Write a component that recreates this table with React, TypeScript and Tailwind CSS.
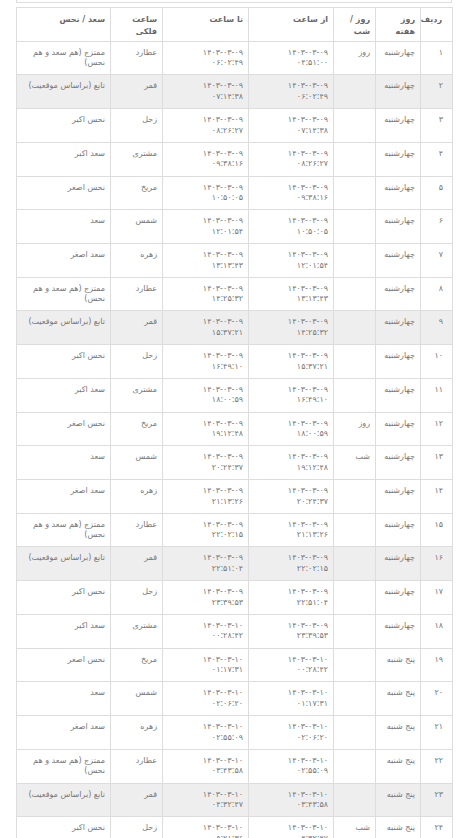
import type { ReactNode } from 'react'

type Row = {
  day: string
  dayNight: string
  from: [string, string]
  to: [string, string]
  planet: string
  fate: string
}

const D09 = '۱۴۰۳-۰۳-۰۹'
const D10 = '۱۴۰۳-۰۳-۱۰'
const WED = 'چهارشنبه'
const THU = 'پنج شنبه'

const fates: Record<string, string[]> = {
  عطارد: ['ممتزج (هم سعد و هم', 'نحس)'],
  قمر: ['تابع (براساس موقعیت)'],
  زحل: ['نحس اکبر'],
  مشتری: ['سعد اکبر'],
  مریخ: ['نحس اصغر'],
  شمس: ['سعد'],
  زهره: ['سعد اصغر'],
}

const planets = ['عطارد', 'قمر', 'زحل', 'مشتری', 'مریخ', 'شمس', 'زهره']

// start times, in order; the end of one hour is the start of the next
const times: Array<[string, string]> = [
  [D09, '۰۴:۵۱:۰۰'],
  [D09, '۰۶:۰۲:۴۹'],
  [D09, '۰۷:۱۴:۳۸'],
  [D09, '۰۸:۲۶:۲۷'],
  [D09, '۰۹:۳۸:۱۶'],
  [D09, '۱۰:۵۰:۰۵'],
  [D09, '۱۲:۰۱:۵۴'],
  [D09, '۱۳:۱۳:۴۳'],
  [D09, '۱۴:۲۵:۳۲'],
  [D09, '۱۵:۳۷:۲۱'],
  [D09, '۱۶:۴۹:۱۰'],
  [D09, '۱۸:۰۰:۵۹'],
  [D09, '۱۹:۱۲:۴۸'],
  [D09, '۲۰:۲۴:۳۷'],
  [D09, '۲۱:۱۳:۲۶'],
  [D09, '۲۲:۰۲:۱۵'],
  [D09, '۲۲:۵۱:۰۴'],
  [D09, '۲۳:۳۹:۵۳'],
  [D10, '۰۰:۲۸:۴۲'],
  [D10, '۰۱:۱۷:۳۱'],
  [D10, '۰۲:۰۶:۲۰'],
  [D10, '۰۲:۵۵:۰۹'],
  [D10, '۰۳:۴۳:۵۸'],
  [D10, '۰۴:۳۲:۴۷'],
  [D10, '۰۵:۲۱:۳۶'],
]

const dayNightMarks: Record<number, string> = { 0: 'روز', 11: 'روز', 12: 'شب', 23: 'شب' }

const rows: Row[] = Array.from({ length: 24 }, (_, i) => {
  const planet = planets[i % 7]
  return {
    day: i < 18 ? WED : THU,
    dayNight: dayNightMarks[i] ?? '',
    from: times[i],
    to: times[i + 1],
    planet,
    fate: planet,
  }
})

const faDigits = (n: number) => String(n).replace(/\d/g, (d) => '۰۱۲۳۴۵۶۷۸۹'[Number(d)])

function Cell({ children, className = '' }: { children?: ReactNode; className?: string }) {
  return (
    <td className={`border border-[#dddddd] pr-[5px] pl-[3px] pt-[6px] align-top leading-[10.5px] ${className}`}>
      {children}
    </td>
  )
}

function Lines({ lines }: { lines: string[] }) {
  return (
    <>
      {lines.map((line) => (
        <div key={line} className="whitespace-nowrap">
          {line}
        </div>
      ))}
    </>
  )
}

export default function App() {
  return (
    <div
      className="h-[838px] w-[470px] overflow-hidden bg-white text-[8px] text-[#777777]"
      style={{ fontFamily: '"DejaVu Sans", Tahoma, sans-serif' }}
    >
      <div className="ml-[16px] h-[3px] w-[436px] border-x border-b border-[#dddddd]" />
      <table dir="rtl" className="ml-[16px] mt-[4px] w-[436px] table-fixed border-collapse">
        <colgroup>
          <col className="w-[32px]" />
          <col className="w-[45px]" />
          <col className="w-[42px]" />
          <col className="w-[85px]" />
          <col className="w-[86px]" />
          <col className="w-[52px]" />
          <col className="w-[94px]" />
        </colgroup>
        <thead>
          <tr className="h-[33.7px] text-right font-bold text-[#666666]">
            <Cell className="pr-[10px] leading-[12px]">ردیف</Cell>
            <Cell className="leading-[12px]">
              <Lines lines={['روز', 'هفته']} />
            </Cell>
            <Cell className="leading-[12px]">
              <Lines lines={['روز /', 'شب']} />
            </Cell>
            <Cell className="leading-[12px]">از ساعت</Cell>
            <Cell className="leading-[12px]">تا ساعت</Cell>
            <Cell className="leading-[12px]">
              <Lines lines={['ساعت', 'فلکی']} />
            </Cell>
            <Cell className="leading-[12px]">سعد / نحس</Cell>
          </tr>
        </thead>
        <tbody>
          {rows.map((row, i) => (
            <tr key={i} className={`h-[33.73px] ${row.planet === 'قمر' ? 'bg-[#eeeeee]' : ''}`}>
              <Cell className="pr-[9px]">{faDigits(i + 1)}</Cell>
              <Cell>{row.day}</Cell>
              <Cell>{row.dayNight}</Cell>
              <Cell>
                <Lines lines={row.from} />
              </Cell>
              <Cell>
                <Lines lines={row.to} />
              </Cell>
              <Cell>{row.planet}</Cell>
              <Cell>
                <Lines lines={fates[row.fate]} />
              </Cell>
            </tr>
          ))}
        </tbody>
      </table>
    </div>
  )
}
